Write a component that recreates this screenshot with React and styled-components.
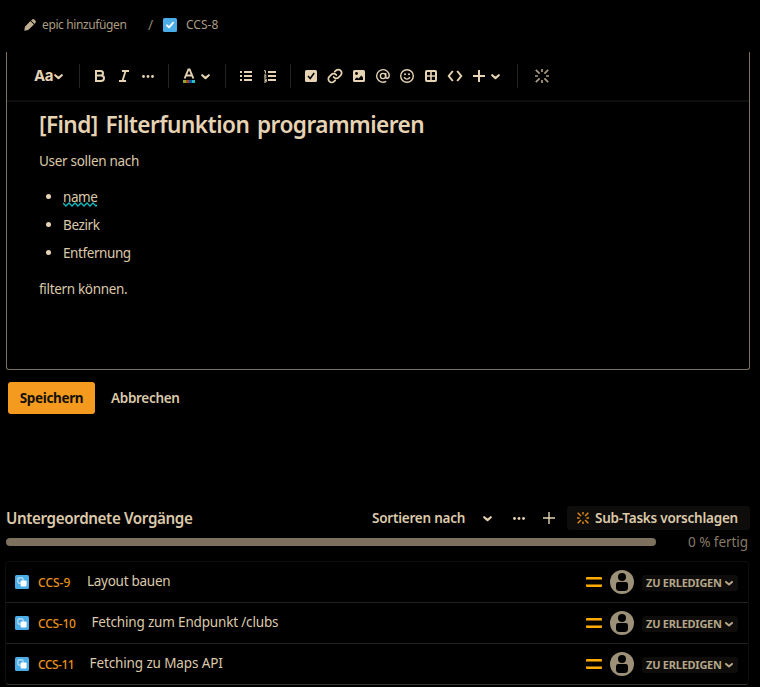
import React from "react";
import styled, { createGlobalStyle, css } from "styled-components";

const Global = createGlobalStyle`
  * { box-sizing: border-box; }
  body { margin: 0; background: #000; color: #e6d3b3; font-family: "Noto Sans", "Open Sans", sans-serif; }
  button { font: inherit; color: inherit; background: none; border: 0; padding: 0; }
  svg { display: block; flex: none; }
`;

const Page = styled.main`
  width: 760px;
  height: 687px;
  overflow: hidden;
  background: #000;
  display: flex;
  flex-direction: column;
`;

const Text = styled.span`
  display: block;
  flex: none;
  white-space: pre;
  font-size: ${(p) => p.$size || 13.5}px;
  font-weight: ${(p) => p.$weight || 400};
  line-height: 20px;
  letter-spacing: ${(p) => p.$track || 0}px;
  color: ${(p) => p.$color || "#dcc9aa"};
`;

const Crumbs = styled.nav`
  height: 52px;
  padding: 0 0 3px 24px;
  display: flex;
  align-items: center;
`;
const PencilSlot = styled.span`width: 18px;`;
const Slash = styled.span`
  width: 15px;
  margin-left: 21px;
  font-size: 14px;
  line-height: 20px;
  color: #8d806b;
`;
const CrumbKey = styled.span`
  display: flex;
  align-items: center;
  gap: 9px;
`;
const CrumbEpic = styled.span`width: 85px;`;

const Editor = styled.section`
  width: 744px;
  height: 318px;
  margin-left: 6px;
  border: 1px solid #7d715d;
  border-top: 0;
  border-radius: 0 0 3px 3px;
`;
const Toolbar = styled.div`
  height: 50px;
  padding-left: 27px;
  display: flex;
  align-items: center;
  border-bottom: 2px solid #0e0e0d;
`;
const Group = styled.div`
  display: flex;
  width: ${(p) => p.$width}px;
  padding-left: ${(p) => p.$pad ?? 8}px;
`;
const Tool = styled.button`
  width: ${(p) => p.$width || 24}px;
  height: 24px;
  display: flex;
  align-items: center;
  justify-content: center;
`;
const Divider = styled.span`
  width: 1px;
  height: 24px;
  background: #262420;
`;

const Body = styled.div`
  padding: 9px 32px 0;
`;
const Title = styled.h1`
  margin: 0;
  font-size: 22.6px;
  font-weight: 600;
  line-height: 28px;
  letter-spacing: -0.55px;
  word-spacing: 2.4px;
  white-space: nowrap;
  color: #e6d3b3;
`;
const Paragraph = styled.div`
  margin-top: ${(p) => p.$top}px;
`;
const Bullets = styled.ul`
  margin: 16px 0 0;
  padding: 0;
  list-style: none;
  display: grid;
  gap: 8px;
`;
const Bullet = styled.li`
  display: flex;
  align-items: center;
  height: 20px;
  padding-left: 7px;
  &::before {
    content: "";
    width: 5px;
    height: 5px;
    margin: 0 12px 2px 0;
    border-radius: 50%;
    background: #e6d3b3;
  }
`;
const Misspelt = styled.span`
  position: relative;
  & > svg { position: absolute; left: 0; top: 15px; }
`;

const Actions = styled.div`
  margin: 12px 0 0 8px;
  display: flex;
  align-items: center;
  gap: 16px;
`;
const Primary = styled.button`
  width: 87px;
  height: 32px;
  border-radius: 3px;
  background: #f49b1f;
  display: flex;
  align-items: center;
  justify-content: center;
`;

const ChildHead = styled.header`
  height: 24px;
  margin: 92px 10px 0 6px;
  display: flex;
  align-items: center;
`;
const HeadTools = styled.div`
  margin-left: auto;
  display: flex;
  align-items: center;
`;
const SortLabel = styled.span`width: 99px;`;
const HeadIcon = styled.button`
  width: ${(p) => p.$width}px;
  height: 24px;
  display: flex;
  align-items: center;
  justify-content: center;
`;
const Suggest = styled.button`
  width: 183px;
  height: 24px;
  margin-left: 4px;
  padding-left: 10px;
  border-radius: 3px;
  background: #0e0d0b;
  display: flex;
  align-items: center;
  gap: 6px;
`;
const ProgressRow = styled.div`
  height: 20px;
  margin: 2px 12px 0 6px;
  display: flex;
  align-items: center;
  justify-content: space-between;
`;
const Track = styled.div`
  width: 650px;
  height: 8px;
  border-radius: 4px;
  background: #7d715d;
`;
const List = styled.div`
  width: 744px;
  height: 124px;
  margin: 9px 0 0 5px;
  border: 1px solid #0f0e0c;
  border-bottom-color: #38332a;
  border-radius: 4px;
`;
const Row = styled.div`
  height: 41px;
  padding: 0 10px 0 9px;
  display: flex;
  align-items: center;
  border-bottom: 1px solid #24221e;
  ${(p) => p.$last && css`border-bottom-color: transparent;`}
`;
const Key = styled.span`
  width: ${(p) => p.$width}px;
  margin-left: 9px;
  padding-top: 1px;
`;
const Summary = styled.span`
  flex: 1;
  padding-bottom: 2px;
`;
const Priority = styled.span`
  width: 16px;
  height: 10px;
  margin-right: 8px;
  border: solid #ffab00;
  border-width: 2px 0;
  border-radius: 1px;
  box-shadow: inset 0 1px #8a5c00, inset 0 -1px #8a5c00;
`;
const Status = styled.button`
  width: 96px;
  height: 16px;
  margin: 2px 0 0 8px;
  padding-left: 4px;
  border-radius: 3px;
  background: #0e0d0b;
  display: flex;
  align-items: center;
  gap: 2px;
`;

const C = "#e6d3b3";
const Chevron = ({ size = 10, color = C }) => (
  <svg width={size} height={size} viewBox="0 0 10 10" fill="none" stroke={color} strokeWidth="2" strokeLinecap="round" strokeLinejoin="round">
    <path d="M2 3.9 5 6.5 8 3.9" />
  </svg>
);
const Pencil = () => (
  <svg width="12" height="12" viewBox="0 0 12 12" fill="#bfae91">
    <path d="M.3 11.7 .9 7.8 6.4 2.1 9.9 5.6 4.2 11.1Z M7.1 1.4 8.2.5Q9.2-.3 10.2.6L11.4 1.8Q12.3 2.8 11.5 3.8L10.6 4.9Z" />
  </svg>
);
const TaskIcon = () => (
  <svg width="14" height="14" viewBox="0 0 14 14">
    <rect width="14" height="14" rx="1.5" fill="#4bade8" />
    <path d="m4 7.3 2 2L10 4.8" fill="none" stroke="#fff" strokeWidth="1.9" strokeLinecap="round" strokeLinejoin="round" />
  </svg>
);
const SubtaskIcon = () => (
  <svg width="14" height="14" viewBox="0 0 14 14">
    <rect width="14" height="14" rx="1.5" fill="#4bade8" />
    <rect x="2.9" y="2.9" width="5.2" height="5.2" rx="1" fill="none" stroke="#c3e2f7" strokeWidth="1.1" />
    <rect x="5.6" y="5.6" width="6" height="5.9" rx="1" fill="#fff" />
  </svg>
);
const Avatar = () => (
  <svg width="24" height="24" viewBox="0 0 24 24">
    <circle cx="12" cy="12" r="12" fill="#9d9079" />
    <circle cx="12" cy="7.1" r="4" fill="#000" />
    <path d="M6 14.3Q6 12 8.3 12H15.7Q18 12 18 14.3V17.5Q18 21 14.5 21H9.5Q6 21 6 17.5Z" fill="#000" />
  </svg>
);
const Dots = () => (
  <svg width="14" height="14" viewBox="0 0 14 14" fill={C}>
    <circle cx="2.5" cy="7.5" r="1.4" /><circle cx="7" cy="7.5" r="1.4" /><circle cx="11.5" cy="7.5" r="1.4" />
  </svg>
);
const Plus = ({ thick = 2, color = C }) => (
  <svg width="12" height="12" viewBox="0 0 12 12" stroke={color} strokeWidth={thick}>
    <path d="M6 0V12M0 6H12" />
  </svg>
);
const Spark = ({ size = 14, color }) => (
  <svg width={size} height={size} viewBox="0 0 14 14" stroke={color} strokeWidth="1.7">
    <path d="M7 0V3M7 11V14M0 7H3M11 7H14M.8.8 4.6 4.6M9.4 9.4 13.2 13.2M13.2.8 9.4 4.6M4.6 9.4.8 13.2" />
  </svg>
);
const Icon = ({ children, ...rest }) => (
  <svg width="16" height="16" viewBox="0 0 16 16" fill="none" stroke={C} strokeWidth="1.5" {...rest}>{children}</svg>
);
const Aa = styled.span`
  width: 20px;
  font: 700 15px/20px Inter, sans-serif;
  letter-spacing: -0.5px;
`;
const BoldIcon = () => (
  <Icon strokeWidth="2"><path d="M4 3H8.5Q11 3 11 5.3 11 7.6 8.5 7.6H4M4 7.6H9Q12 7.6 12 10.3 12 13 9 13H4V2" /></Icon>
);
const ItalicIcon = () => <Icon strokeWidth="1.8"><path d="M6 3H13M3 13H10M9.6 3 6.4 13" /></Icon>;
const ColorIcon = () => (
  <Icon>
    <path d="M3.6 10.5 7.4 1.5H8.6L12.4 10.5M5 7.5H11" strokeWidth="1.9" />
    <g stroke="none">
      <rect x="2" y="12" width="3" height="3" fill="#8fa832" /><rect x="5" y="12" width="3" height="3" fill="#b0471d" />
      <rect x="8" y="12" width="3" height="3" fill="#0a58a8" /><rect x="11" y="12" width="3" height="3" fill="#2bbfca" />
    </g>
  </Icon>
);
const BulletIcon = () => <Icon strokeWidth="2"><path d="M2 4H4M6 4H14M2 8H4M6 8H14M2 12H4M6 12H14" /></Icon>;
const NumberIcon = () => (
  <Icon strokeWidth="2">
    <path d="M6 4H14M6 8H14M6 12H14" />
    <path d="M2 2.7H3.4V5.6M2 7H4.2L2.3 9.2H4.6M2 11H4.2V14H2M2.6 12.5H4.2" strokeWidth="1" />
  </Icon>
);
const CheckIcon = () => (
  <Icon><rect x="2" y="2" width="12" height="12" rx="1.5" fill={C} stroke="none" /><path d="M5 8 7.2 10.5 11.2 5" stroke="#000" strokeWidth="1.5" /></Icon>
);
const LinkIcon = () => (
  <Icon viewBox="0 0 24 24" strokeWidth="2.6" strokeLinecap="round">
    <path d="M10 13.5a5 5 0 0 0 7.5.5l3-3a5 5 0 0 0-7.1-7.1l-1.7 1.7M14 10.5a5 5 0 0 0-7.5-.5l-3 3a5 5 0 0 0 7.1 7.1l1.7-1.7" />
  </Icon>
);
const ImageIcon = () => (
  <Icon>
    <rect x="2" y="2" width="12" height="12" rx="1.5" fill={C} stroke="none" />
    <circle cx="5.5" cy="5.5" r="1.4" fill="#000" stroke="none" />
    <path d="M4 12V11L6 9.3 7.5 10.4 10.3 7.5 12 9.5V12Z" fill="#000" stroke="none" />
  </Icon>
);
const AtIcon = () => (
  <Icon strokeWidth="1.4"><circle cx="8" cy="8" r="2.6" /><path d="M10.7 5V8.7Q10.9 10.5 12.4 10.3 14.3 9.8 14.3 7.6A6.3 6.3 0 1 0 11.2 13.4" /></Icon>
);
const SmileIcon = () => (
  <Icon strokeWidth="1.4">
    <circle cx="8" cy="8" r="6.3" /><path d="M5 9.2Q8 13 11 9.2" />
    <circle cx="6" cy="6.3" r="1" fill={C} stroke="none" /><circle cx="10" cy="6.3" r="1" fill={C} stroke="none" />
  </Icon>
);
const TableIcon = () => <Icon strokeWidth="2"><rect x="3" y="3" width="10" height="10" rx=".8" /><path d="M8 3V13M3 8H13" strokeWidth="1.6" /></Icon>;
const CodeIcon = () => <Icon strokeWidth="2"><path d="M5.8 3 1.8 8 5.8 13M10.2 3 14.2 8 10.2 13" /></Icon>;
const Squiggle = () => (
  <svg width="34" height="5" viewBox="0 0 34 5" fill="none" stroke="#13b9bd" strokeWidth="1.3">
    <path d="M0 1 3 4 6 1 9 4 12 1 15 4 18 1 21 4 24 1 27 4 30 1 33 4 34 3" />
  </svg>
);

const issues = [
  { id: "CCS-9", width: 49, keyTrack: 0, title: "Layout bauen", track: -0.27 },
  { id: "CCS-10", width: 53.5, keyTrack: -0.25, title: "Fetching zum Endpunkt /clubs", track: -0.17 },
  { id: "CCS-11", width: 51.5, keyTrack: -0.5, title: "Fetching zu Maps API", track: -0.12 },
];

export default function App() {
  return (
    <Page>
      <Global />
      <Crumbs>
        <PencilSlot><Pencil /></PencilSlot>
        <CrumbEpic><Text $size={12} $track={-0.38} $color="#ab9c82">epic hinzufügen</Text></CrumbEpic>
        <Slash>/</Slash>
        <CrumbKey><TaskIcon /><Text $size={12} $color="#ab9c82">CCS-8</Text></CrumbKey>
      </Crumbs>
      <Editor>
        <Toolbar>
          <Group $width={45} $pad={0}><Tool $width={30}><Aa>Aa</Aa><Chevron size={11} /></Tool></Group>
          <Divider />
          <Group $width={88}><Tool><BoldIcon /></Tool><Tool><ItalicIcon /></Tool><Tool><Dots /></Tool></Group>
          <Divider />
          <Group $width={56}><Tool><ColorIcon /></Tool><Tool $width={8}><Chevron size={11} /></Tool></Group>
          <Divider />
          <Group $width={64}><Tool><BulletIcon /></Tool><Tool><NumberIcon /></Tool></Group>
          <Divider />
          <Group $width={226}>
            <Tool><CheckIcon /></Tool><Tool><LinkIcon /></Tool><Tool><ImageIcon /></Tool><Tool><AtIcon /></Tool>
            <Tool><SmileIcon /></Tool><Tool><TableIcon /></Tool><Tool><CodeIcon /></Tool><Tool><Plus /></Tool>
            <Tool $width={8}><Chevron size={11} /></Tool>
          </Group>
          <Divider />
          <Group $width={40} $pad={12}><Tool><Spark color="#a99a80" /></Tool></Group>
        </Toolbar>
        <Body>
          <Title>[Find] Filterfunktion programmieren</Title>
          <Paragraph $top={12}><Text $track={-0.3}>User sollen nach</Text></Paragraph>
          <Bullets>
            <Bullet><Misspelt><Text $track={-0.4}>name</Text><Squiggle /></Misspelt></Bullet>
            <Bullet><Text $track={-0.38}>Bezirk</Text></Bullet>
            <Bullet><Text $track={-0.42}>Entfernung</Text></Bullet>
          </Bullets>
          <Paragraph $top={16}><Text $track={-0.32}>filtern können.</Text></Paragraph>
        </Body>
      </Editor>
      <Actions>
        <Primary><Text $weight={700} $track={-0.35} $color="#15100a">Speichern</Text></Primary>
        <Text $weight={600} $track={-0.3}>Abbrechen</Text>
      </Actions>
      <ChildHead>
        <Text $size={15.2} $weight={600} $track={-0.38}>Untergeordnete Vorgänge</Text>
        <HeadTools>
          <SortLabel><Text $weight={600} $track={-0.22}>Sortieren nach</Text></SortLabel>
          <HeadIcon $width={32}><Chevron size={11} /></HeadIcon>
          <HeadIcon $width={32}><Dots /></HeadIcon>
          <HeadIcon $width={28}><Plus thick={1.4} /></HeadIcon>
          <Suggest><Spark size={12} color="#e08a12" /><Text $weight={600} $track={-0.23}>Sub-Tasks vorschlagen</Text></Suggest>
        </HeadTools>
      </ChildHead>
      <ProgressRow><Track /><Text $track={-0.05} $color="#877b67">0 % fertig</Text></ProgressRow>
      <List>
        {issues.map((it, i) => (
          <Row key={it.id} $last={i === issues.length - 1}>
            <SubtaskIcon />
            <Key $width={it.width}><Text $size={12} $weight={500} $track={it.keyTrack} $color="#e9911a">{it.id}</Text></Key>
            <Summary><Text $track={it.track}>{it.title}</Text></Summary>
            <Priority />
            <Avatar />
            <Status><Text $size={11} $weight={700} $track={-0.24} $color="#b5a589">ZU ERLEDIGEN</Text><Chevron size={10} color="#b5a589" /></Status>
          </Row>
        ))}
      </List>
    </Page>
  );
}
